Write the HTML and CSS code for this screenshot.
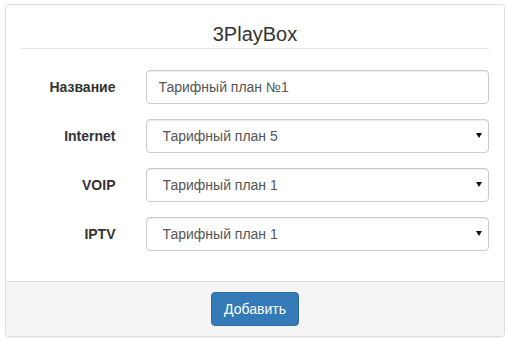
FILE: index.html
```html
<!DOCTYPE html>
<html lang="ru">
<head>
<meta charset="utf-8">
<title>3PlayBox</title>
<link rel="stylesheet" href="styles.css">
</head>
<body>
<form class="panel">
  <div class="panel-body">
    <h4 class="panel-title">3PlayBox</h4>
    <div class="form-row">
      <label class="form-label" for="name">Название</label>
      <input class="form-control" id="name" type="text" value="Тарифный план №1">
    </div>
    <div class="form-row">
      <label class="form-label" for="internet">Internet</label>
      <div class="select-wrap">
        <select class="form-control form-select" id="internet"><option>Тарифный план 5</option></select>
        <svg class="caret" width="6" height="5" viewBox="0 0 6 5"><path d="M0 0H6L3 5Z" fill="#111"/></svg>
      </div>
    </div>
    <div class="form-row">
      <label class="form-label" for="voip">VOIP</label>
      <div class="select-wrap">
        <select class="form-control form-select" id="voip"><option>Тарифный план 1</option></select>
        <svg class="caret" width="6" height="5" viewBox="0 0 6 5"><path d="M0 0H6L3 5Z" fill="#111"/></svg>
      </div>
    </div>
    <div class="form-row">
      <label class="form-label" for="iptv">IPTV</label>
      <div class="select-wrap">
        <select class="form-control form-select" id="iptv"><option>Тарифный план 1</option></select>
        <svg class="caret" width="6" height="5" viewBox="0 0 6 5"><path d="M0 0H6L3 5Z" fill="#111"/></svg>
      </div>
    </div>
  </div>
  <div class="panel-footer">
    <button class="btn-primary" type="button">Добавить</button>
  </div>
</form>
</body>
</html>
```
FILE: styles.css
```css
html, body {
  margin: 0;
  padding: 0;
  background: #fff;
}
body {
  padding: 4px 5px;
  font-family: "Liberation Sans", Arial, sans-serif;
  font-size: 14px;
  color: #333;
}
.panel {
  width: 500px;
  box-sizing: border-box;
  border: 1px solid #ddd;
  border-radius: 4px;
  background: #fff;
  box-shadow: 0 1px 1px rgba(0,0,0,0.05);
}
.panel-body {
  padding: 15px 15px 0;
}
.panel-title {
  margin: 3px 0 21px;
  padding-bottom: 3px;
  border-bottom: 1px solid #e5e5e5;
  text-align: center;
  font-size: 20px;
  line-height: 22px;
  font-weight: normal;
  color: #333;
}
.form-row {
  display: grid;
  grid-template-columns: 94.5px 1fr;
  column-gap: 30px;
  align-items: center;
  margin-bottom: 15px;
}
.form-row:last-child {
  margin-bottom: 0;
  padding-bottom: 30px;
}
.form-label {
  text-align: right;
  font-weight: bold;
  color: #333;
}
.form-control {
  display: block;
  width: 100%;
  height: 34px;
  box-sizing: border-box;
  margin: 0;
  padding: 6px 12px;
  font-family: inherit;
  font-size: 14px;
  line-height: 20px;
  color: #555;
  background: #fff;
  border: 1px solid #ccc;
  border-radius: 4px;
  box-shadow: inset 0 1px 1px rgba(0,0,0,0.075);
  outline: none;
}
.select-wrap {
  position: relative;
}
.form-select {
  -webkit-appearance: none;
  appearance: none;
  padding-left: 16px;
}
.caret {
  position: absolute;
  right: 7px;
  top: 14px;
  pointer-events: none;
}
.panel-footer {
  padding: 10px 15px;
  background: #f5f5f5;
  border-top: 1px solid #ddd;
  border-radius: 0 0 3px 3px;
  text-align: center;
}
.btn-primary {
  height: 34px;
  padding: 6px 12px;
  font-family: inherit;
  font-size: 14px;
  line-height: 20px;
  color: #fff;
  background: #337ab7;
  border: 1px solid #2e6da4;
  border-radius: 4px;
  cursor: pointer;
  vertical-align: middle;
}
```
